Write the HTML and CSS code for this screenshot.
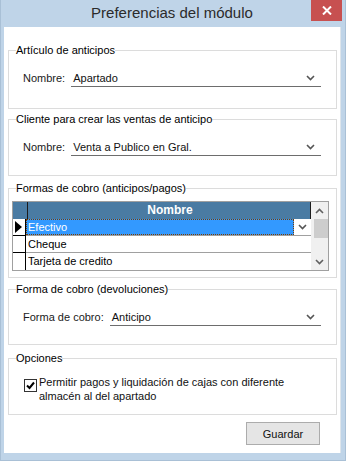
FILE: index.html
```html
<!DOCTYPE html>
<html>

<head>
  <title>Preferencias del módulo</title>
  <link rel="stylesheet" href="styles.css">
</head>

<body>
  <div class="window">
    <div class="title-bar">
      <span></span>
      <span class="title">Preferencias del módulo</span>
      <button class="close-btn">
        <svg width="10" height="9" viewBox="0 0 10 9"><path d="M1 0.5 L9 8.5 M9 0.5 L1 8.5" stroke="#fff" stroke-width="2"/></svg>
      </button>
    </div>

    <div class="client">
      <fieldset class="group group-articulo">
        <legend>Artículo de anticipos</legend>
        <div class="field-row">
          <span class="field-label">Nombre:</span>
          <div class="combo">
            <span>Apartado</span>
            <svg class="chevron" width="9" height="6" viewBox="0 0 9 6"><path d="M1 1 L4.5 4.5 L8 1" fill="none" stroke="#555" stroke-width="1.6"/></svg>
          </div>
        </div>
      </fieldset>

      <fieldset class="group group-cliente">
        <legend>Cliente para crear las ventas de anticipo</legend>
        <div class="field-row">
          <span class="field-label">Nombre:</span>
          <div class="combo">
            <span>Venta a Publico en Gral.</span>
            <svg class="chevron" width="9" height="6" viewBox="0 0 9 6"><path d="M1 1 L4.5 4.5 L8 1" fill="none" stroke="#555" stroke-width="1.6"/></svg>
          </div>
        </div>
      </fieldset>

      <fieldset class="group group-formas">
        <legend>Formas de cobro (anticipos/pagos)</legend>
        <div class="grid">
          <div class="grid-main">
            <div class="grid-row grid-head">
              <div class="row-selector"></div>
              <div class="cell head-cell">Nombre</div>
            </div>
            <div class="grid-row">
              <div class="row-selector">
                <svg width="7" height="12" viewBox="0 0 7 12"><path d="M0 0 L7 6 L0 12 Z" fill="#000"/></svg>
              </div>
              <div class="cell cell-selected">
                <span class="focus-box">Efectivo</span>
                <span class="cell-drop">
                  <svg width="9" height="6" viewBox="0 0 9 6"><path d="M1 1 L4.5 4.5 L8 1" fill="none" stroke="#555" stroke-width="1.6"/></svg>
                </span>
              </div>
            </div>
            <div class="grid-row">
              <div class="row-selector"></div>
              <div class="cell">Cheque</div>
            </div>
            <div class="grid-row">
              <div class="row-selector"></div>
              <div class="cell">Tarjeta de credito</div>
            </div>
          </div>
          <div class="scrollbar">
            <div class="scroll-btn">
              <svg width="9" height="6" viewBox="0 0 9 6"><path d="M1 5 L4.5 1.5 L8 5" fill="none" stroke="#606060" stroke-width="1.6"/></svg>
            </div>
            <div class="scroll-thumb"></div>
            <div class="scroll-track"></div>
            <div class="scroll-btn">
              <svg width="9" height="6" viewBox="0 0 9 6"><path d="M1 1 L4.5 4.5 L8 1" fill="none" stroke="#606060" stroke-width="1.6"/></svg>
            </div>
          </div>
        </div>
      </fieldset>

      <fieldset class="group group-devol">
        <legend>Forma de cobro (devoluciones)</legend>
        <div class="field-row">
          <span class="field-label">Forma de cobro:</span>
          <div class="combo">
            <span>Anticipo</span>
            <svg class="chevron" width="9" height="6" viewBox="0 0 9 6"><path d="M1 1 L4.5 4.5 L8 1" fill="none" stroke="#555" stroke-width="1.6"/></svg>
          </div>
        </div>
      </fieldset>

      <fieldset class="group group-opciones">
        <legend>Opciones</legend>
        <label class="check-row">
          <span class="check-box">
            <svg width="11" height="11" viewBox="0 0 11 11"><path d="M2 5.5 L4.5 8 L9 2.5" fill="none" stroke="#000" stroke-width="2"/></svg>
          </span>
          <span>Permitir pagos y liquidación de cajas con diferente<br>almacén al del apartado</span>
        </label>
      </fieldset>

      <div class="actions">
        <button class="btn">Guardar</button>
      </div>
    </div>
  </div>
</body>

</html>
```

FILE: styles.css
```css
body {
  margin: 0;
  font-family: "Liberation Sans", Arial, sans-serif;
  font-size: 11px;
  color: #000;
  background-color: #bfd4e8;
}

.window {
  width: 346px;
  height: 461px;
  box-sizing: border-box;
  padding: 0 4px 7px 4px;
  background-color: #bfd4e8;
  border-left: 1px solid #a9c0d6;
  border-right: 1px solid #a9c0d6;
  border-bottom: 1px solid #a9c0d6;
  display: flex;
  flex-direction: column;
}

.title-bar {
  height: 27px;
  display: grid;
  grid-template-columns: 1fr auto 1fr;
  align-items: start;
  margin: 0 -1px 0 -3px;
}

.title {
  font-size: 15px;
  line-height: 26px;
  color: #2b2b2b;
}

.close-btn {
  justify-self: end;
  width: 31px;
  height: 21px;
  border: none;
  padding: 0;
  background-color: #c75050;
  display: flex;
  align-items: center;
  justify-content: center;
}

.client {
  flex: 1;
  background-color: #fff;
  padding-top: 16px;
  border-right: 1px solid #dde5ec;
  margin-left: -1px;
  display: flex;
  flex-direction: column;
}

.group {
  margin: 0 3px 0 4px;
  padding: 0 3px;
  border: 1px solid #dcdcdc;
  min-width: 0;
}

.group legend {
  margin-left: 4px;
  padding: 0;
  line-height: 14px;
  color: #000;
}

.group-articulo {
  padding-bottom: 21px;
}

.group-cliente {
  margin-top: 3px;
  padding-bottom: 19px;
}

.group-formas {
  margin-top: 5px;
  padding-top: 6px;
  padding-bottom: 6px;
}

.group-devol {
  margin-top: 4px;
  padding-bottom: 18px;
}

.group-opciones {
  margin-top: 6px;
  padding-top: 10px;
  padding-bottom: 11px;
}

.field-row {
  display: flex;
  align-items: center;
  gap: 6px;
  padding: 12px 12px 0 11px;
}

.field-label {
  color: #1a1a1a;
}

.combo {
  flex: 1;
  height: 17px;
  border-bottom: 1px solid #6d6d6d;
  display: flex;
  align-items: center;
  justify-content: space-between;
  padding: 0 6px 0 2px;
  color: #111;
}

/* grid of payment forms */
.grid {
  display: flex;
  height: 68px;
  margin-right: 4px;
  border: 1px solid #a0a0a0;
}

.grid-main {
  flex: 1;
  display: flex;
  flex-direction: column;
}

.grid-row {
  display: flex;
  height: 17px;
}

.row-selector {
  width: 13px;
  border-right: 1px solid #000;
  border-bottom: 1px solid #000;
  box-sizing: border-box;
  display: flex;
  align-items: center;
  padding-left: 2px;
}

.cell {
  flex: 1;
  border-bottom: 1px solid #a0a0a0;
  padding-left: 2px;
  line-height: 16px;
  display: flex;
}

.grid-head {
  background-color: #4a7ba3;
}

.grid-head .row-selector {
  width: 14px;
  border-right: none;
  border-bottom: none;
}

.head-cell {
  justify-content: center;
  font-weight: bold;
  font-size: 12px;
  color: #fff;
  border-bottom: none;
  border-right: 1px solid #1c1c1c;
  border-left: 1px solid #1c1c1c;
}

.cell-selected {
  padding-left: 0;
}

.focus-box {
  flex: 1;
  background-color: #3399ff;
  color: #fff;
  outline: 1px dotted #7a3d00;
  outline-offset: -1px;
  padding-left: 2px;
}

.cell-drop {
  width: 17px;
  display: flex;
  align-items: center;
  justify-content: center;
  background-color: #fff;
}

.grid-row:last-child .row-selector,
.grid-row:last-child .cell {
  border-bottom: none;
}

.scrollbar {
  width: 17px;
  background-color: #f0f0f0;
  display: flex;
  flex-direction: column;
}

.scroll-btn {
  height: 17px;
  display: flex;
  align-items: center;
  justify-content: center;
}

.scroll-thumb {
  height: 19px;
  margin-left: 3px;
  background-color: #cdcdcd;
}

.scroll-track {
  flex: 1;
}

/* options */
.check-row {
  display: flex;
  align-items: flex-start;
  gap: 2px;
  padding-left: 12px;
  line-height: 14px;
  color: #111;
}

.check-box {
  width: 11px;
  height: 11px;
  margin-top: 4px;
  border: 1px solid #333;
  background-color: #fff;
  display: flex;
}

.actions {
  display: flex;
  justify-content: flex-end;
  padding: 7px 20px 0 0;
}

.btn {
  width: 74px;
  height: 23px;
  font-family: "Liberation Sans", Arial, sans-serif;
  font-size: 11px;
  color: #111;
  background-color: #e5e5e5;
  border: 1px solid #acacac;
  padding: 0;
}
```
